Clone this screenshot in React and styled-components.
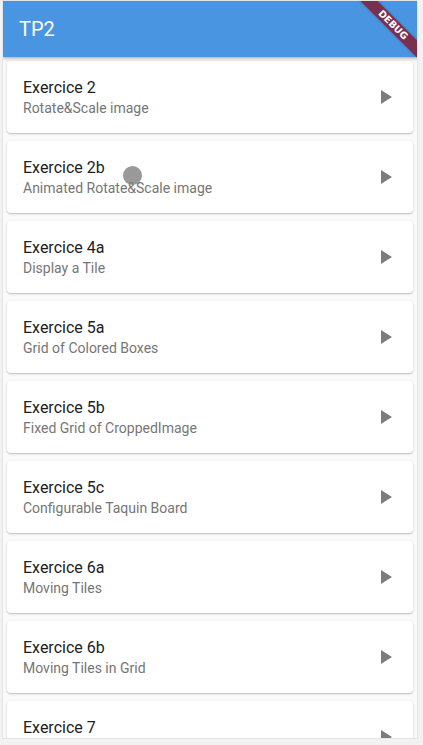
import React from "react";
import styled, { createGlobalStyle } from "styled-components";

const Global = createGlobalStyle`
  html, body { margin: 0; padding: 0; background: #f2f2f2; }
  body { font-family: Roboto, "Noto Sans", "Liberation Sans", sans-serif; }
  #root { width: 423px; height: 745px; position: relative; overflow: hidden; }
`;

const Frame = styled.div`
  position: relative;
  box-sizing: content-box;
  margin-left: 2px;
  width: 414px;
  height: 737px;
  border: 1px solid #e4e4e4;
  background: #fafafa;
  overflow: hidden;
  display: flex;
  flex-direction: column;
`;

const AppBar = styled.header`
  flex: 0 0 56px;
  display: flex;
  align-items: center;
  padding-left: 16px;
  background: #4a95e2;
  color: #fff;
  font-size: 20px;
  box-shadow: 0 2px 4px rgba(0, 0, 0, 0.2), 0 1px 2px rgba(0, 0, 0, 0.12);
  position: relative;
  z-index: 1;
`;

const List = styled.div`
  flex: 1;
  min-height: 0;
  overflow: hidden;
  display: flex;
  flex-direction: column;
  gap: 8px;
  padding: 4px;
`;

const Card = styled.div`
  flex: 0 0 72px;
  height: 72px;
  box-sizing: border-box;
  background: #fff;
  border-radius: 4px;
  box-shadow: 0 1px 3px rgba(0, 0, 0, 0.16), 0 1px 1px rgba(0, 0, 0, 0.1);
  display: flex;
  align-items: flex-start;
  padding: 17px 16px 0 16px;
`;

const Texts = styled.div`
  flex: 1;
  display: flex;
  flex-direction: column;
`;

const Title = styled.div`
  font-size: 16px;
  line-height: 20px;
  color: #212121;
`;

const Subtitle = styled.div`
  font-size: 14px;
  line-height: 20px;
  color: #767676;
`;

const Trailing = styled.svg`
  width: 24px;
  height: 24px;
  margin-top: 7px;
  fill: #7c7c7c;
  flex: 0 0 auto;
`;

const Banner = styled.div`
  position: absolute;
  top: 18px;
  right: -36px;
  width: 120px;
  height: 12px;
  background: #7b2f4e;
  transform: rotate(45deg);
  color: #fff;
  font-family: "DejaVu Sans", "Liberation Sans", sans-serif;
  font-weight: bold;
  font-size: 9.5px;
  line-height: 12px;
  text-align: center;
  box-shadow: 0 0 3px rgba(0, 0, 0, 0.3);
  z-index: 2;
`;

const Touch = styled.div`
  position: absolute;
  left: 123px;
  top: 166px;
  width: 19px;
  height: 19px;
  border-radius: 50%;
  background: rgba(128, 128, 128, 0.8);
  z-index: 3;
`;

const items = [
  ["Exercice 2", "Rotate&Scale image"],
  ["Exercice 2b", "Animated Rotate&Scale image"],
  ["Exercice 4a", "Display a Tile"],
  ["Exercice 5a", "Grid of Colored Boxes"],
  ["Exercice 5b", "Fixed Grid of CroppedImage"],
  ["Exercice 5c", "Configurable Taquin Board"],
  ["Exercice 6a", "Moving Tiles"],
  ["Exercice 6b", "Moving Tiles in Grid"],
  ["Exercice 7", null],
];

export default function App() {
  return (
    <>
      <Global />
      <Frame>
        <AppBar>TP2</AppBar>
        <Banner>DEBUG</Banner>
        <List>
          {items.map(([t, s]) => (
            <Card key={t}>
              <Texts>
                <Title>{t}</Title>
                {s && <Subtitle>{s}</Subtitle>}
              </Texts>
              <Trailing viewBox="0 0 24 24">
                <path d="M8 5v14l11-7z" />
              </Trailing>
            </Card>
          ))}
        </List>
      </Frame>
      <Touch />
    </>
  );
}
